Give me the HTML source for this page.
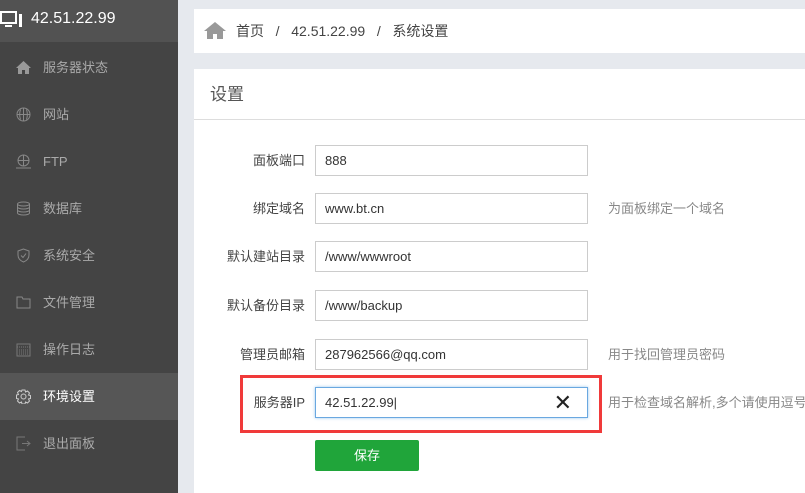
<!DOCTYPE html>
<html><head><meta charset="utf-8"><style>
*{margin:0;padding:0;box-sizing:border-box}
body{width:805px;height:493px;overflow:hidden;background:#e6e9ee;font-family:"Liberation Sans","Noto Sans CJK SC",sans-serif;font-size:13px;position:relative}
.sb{position:absolute;left:0;top:0;width:178px;height:493px;background:#444}
.hd{height:42px;background:#525252;color:#fff;font-size:16px;line-height:38px;padding-left:31px;position:relative}
.item{position:absolute;left:0;width:178px;height:47px;line-height:47px;color:#aaa;padding-left:43px;font-size:13px}
.item.act{background:#565656;color:#fff}
.ic{position:absolute;left:16px;top:16px;width:15px;height:15px}
.bc{position:absolute;left:194px;top:9px;width:611px;height:44px;background:#fff;line-height:44px;padding-left:42px;color:#444;font-size:14px}
.box{position:absolute;left:194px;top:69px;width:611px;height:424px;background:#fff}
.ttl{height:51px;border-bottom:1px solid #ddd;line-height:52px;padding-left:16px;font-size:17px;color:#555}
.row{position:absolute;left:0;height:31px;width:611px}
.lab{position:absolute;right:500px;top:0;line-height:31px;color:#444;white-space:nowrap}
.inp{position:absolute;left:121px;top:0;width:273px;height:31px;border:1px solid #ccc;line-height:29px;padding-left:9px;color:#333;font-size:13px}
.tip{position:absolute;left:414px;line-height:31px;color:#888;white-space:nowrap}
.btn{position:absolute;left:121px;top:371px;width:104px;height:31px;background:#20a53a;border-radius:2px;color:#fff;text-align:center;line-height:31px}
.red{position:absolute;left:240px;top:375px;width:362px;height:58px;border:3px solid #f03a3a}
</style></head><body>
<div class="sb">
<div class="hd"><svg style="position:absolute;left:0;top:11px" width="24" height="18" viewBox="0 0 24 18"><rect x="1" y="1" width="15" height="11" fill="none" stroke="#fff" stroke-width="2"/><rect x="5" y="14" width="7" height="2" fill="#fff"/><rect x="19" y="3" width="3" height="13" fill="#fff"/></svg>42.51.22.99</div>
<div class="item" style="top:44px"><svg class="ic" viewBox="0 0 15 15"><path d="M7.5 1L0 8h2v6h4V10h3v4h4V8h2z" fill="#999"/></svg>服务器状态</div>
<div class="item" style="top:91px"><svg class="ic" viewBox="0 0 15 15" fill="none" stroke="#888"><circle cx="7.5" cy="7.5" r="6.5"/><path d="M1 7.5h13M7.5 1v13M4.5 2.5c-1 3-1 7 0 10M10.5 2.5c1 3 1 7 0 10"/></svg>网站</div>
<div class="item" style="top:138px"><svg class="ic" viewBox="0 0 15 15" fill="none" stroke="#888"><circle cx="7.5" cy="6.5" r="5.5"/><path d="M2 6.5h11M7.5 1v11M0 14h15"/></svg>FTP</div>
<div class="item" style="top:185px"><svg class="ic" viewBox="0 0 15 15" fill="none" stroke="#888"><ellipse cx="7.5" cy="3" rx="6" ry="2"/><path d="M1.5 3v9c0 1 2.5 2 6 2s6-1 6-2V3M1.5 6c0 1 2.5 2 6 2s6-1 6-2M1.5 9c0 1 2.5 2 6 2s6-1 6-2"/></svg>数据库</div>
<div class="item" style="top:232px"><svg class="ic" viewBox="0 0 15 15" fill="none" stroke="#888"><path d="M7.5 1L2 3v4c0 4 3 6 5.5 7 2.5-1 5.5-3 5.5-7V3z"/><path d="M5 7.5l2 2 3-4"/></svg>系统安全</div>
<div class="item" style="top:279px"><svg class="ic" viewBox="0 0 15 15" fill="none" stroke="#888"><path d="M1 2h5l1 2h7v9H1z"/></svg>文件管理</div>
<div class="item" style="top:326px"><svg class="ic" viewBox="0 0 15 15" fill="none" stroke="#777"><rect x="1" y="2" width="13" height="12"/><path d="M1 5h13M3 8h9M3 10h9M3 12h9" stroke-dasharray="1 1"/></svg>操作日志</div>
<div class="item act" style="top:373px"><svg class="ic" viewBox="0 0 15 15" fill="none" stroke="#ccc"><circle cx="7.5" cy="7.5" r="2.5"/><path d="M6 1h3l.5 2 2-1 2 2-1 2 2 .5v3l-2 .5 1 2-2 2-2-1-.5 2H6l-.5-2-2 1-2-2 1-2-2-.5V6l2-.5-1-2 2-2 2 1z"/></svg>环境设置</div>
<div class="item" style="top:420px"><svg class="ic" viewBox="0 0 15 15" fill="none" stroke="#777"><path d="M9 1H1v13h8M6 7.5h8M11 5l3 2.5-3 2.5"/></svg>退出面板</div>
</div>
<div class="bc"><svg style="position:absolute;left:10px;top:12px" width="22" height="19" viewBox="0 0 22 19"><path d="M11 1L0 10h3v8h6v-5h4v5h6v-8h3z" fill="#999"/></svg>首页 &nbsp; / &nbsp; 42.51.22.99 &nbsp; / &nbsp; 系统设置</div>
<div class="box">
<div class="ttl">设置</div>
<div class="row" style="top:76px"><span class="lab">面板端口</span><div class="inp">888</div></div>
<div class="row" style="top:124px"><span class="lab">绑定域名</span><div class="inp">www.bt.cn</div><span class="tip">为面板绑定一个域名</span></div>
<div class="row" style="top:172px"><span class="lab">默认建站目录</span><div class="inp">/www/wwwroot</div></div>
<div class="row" style="top:221px"><span class="lab">默认备份目录</span><div class="inp">/www/backup</div></div>
<div class="row" style="top:270px"><span class="lab">管理员邮箱</span><div class="inp">287962566@qq.com</div><span class="tip">用于找回管理员密码</span></div>
<div class="row" style="top:318px"><span class="lab">服务器IP</span><div class="inp" style="border-color:#6aa8e0;box-shadow:0 0 3px #9cc8ef">42.51.22.99|<span style="position:absolute;right:15px;top:0;font-size:22px;color:#222">✕</span></div><span class="tip">用于检查域名解析,多个请使用逗号隔开</span></div>
<div class="btn">保存</div>
</div>
<div class="red"></div>
</body></html>
